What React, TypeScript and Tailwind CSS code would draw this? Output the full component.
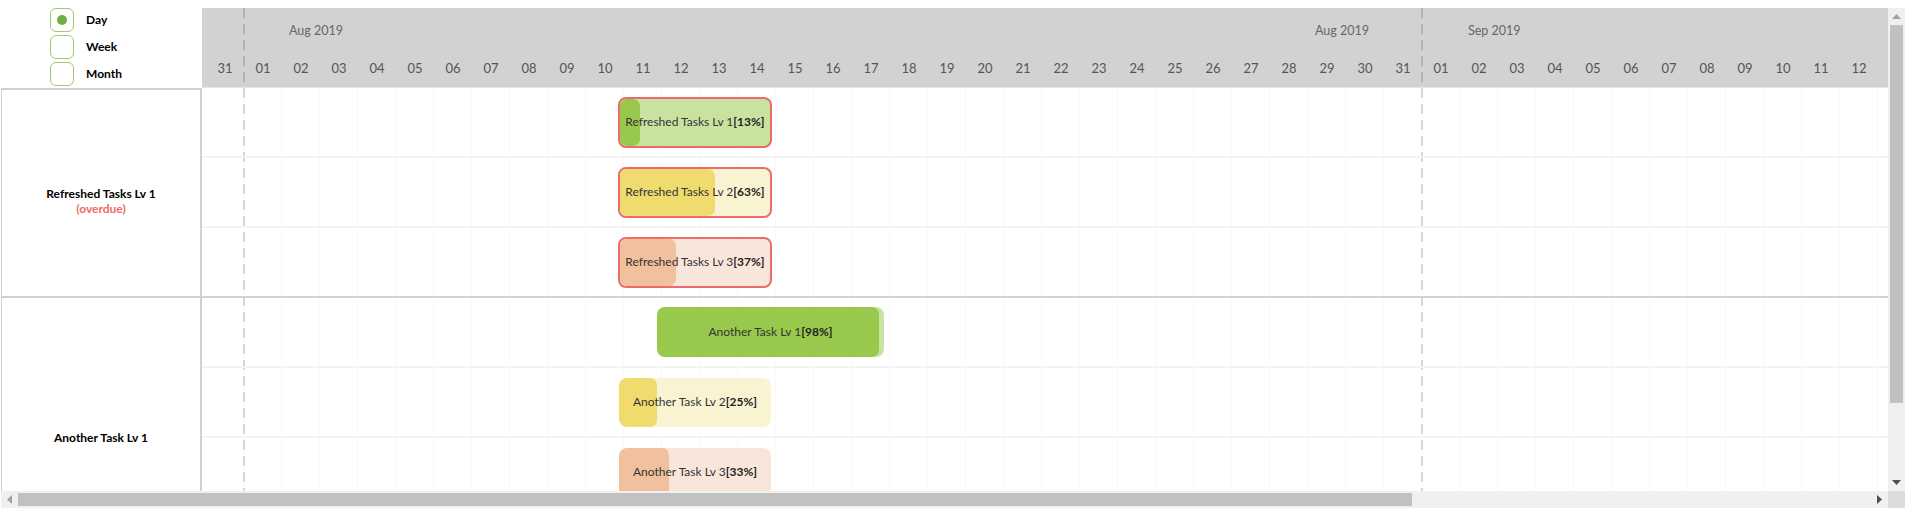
import React from "react";

const pad = (n: number) => String(n).padStart(2, "0");
const days = [
  "31",
  ...Array.from({ length: 31 }, (_, i) => pad(i + 1)),
  ...Array.from({ length: 12 }, (_, i) => pad(i + 1)),
];

type Task = {
  label: string;
  pct: number;
  left: number;
  width: number;
  height: number;
  fill: string;
  track: string;
  overdue?: boolean;
};

const groupOne: Task[] = [
  { label: "Refreshed Tasks Lv 1", pct: 13, left: 416, width: 154, height: 51, fill: "bg-[#98c94c]", track: "bg-[#c8e2a0]", overdue: true },
  { label: "Refreshed Tasks Lv 2", pct: 63, left: 416, width: 154, height: 51, fill: "bg-[#f0dc6e]", track: "bg-[#faf3d2]", overdue: true },
  { label: "Refreshed Tasks Lv 3", pct: 37, left: 416, width: 154, height: 51, fill: "bg-[#f0c19c]", track: "bg-[#f8e6da]", overdue: true },
];

const groupTwo: Task[] = [
  { label: "Another Task Lv 1", pct: 98, left: 455, width: 227, height: 50, fill: "bg-[#98c94c]", track: "bg-[#c8e2a0]" },
  { label: "Another Task Lv 2", pct: 25, left: 417, width: 152, height: 49, fill: "bg-[#f0dc6e]", track: "bg-[#faf3d2]" },
  { label: "Another Task Lv 3", pct: 33, left: 417, width: 152, height: 49, fill: "bg-[#f0c19c]", track: "bg-[#f8e6da]" },
];

function Bar({ task }: { task: Task }) {
  return (
    <div
      className={`relative shrink-0 overflow-hidden rounded-[8px] ${task.track} ${
        task.overdue ? "border-2 border-[#ee6b6b]" : ""
      }`}
      style={{ marginLeft: task.left, width: task.width, height: task.height }}
    >
      <div
        className={`absolute inset-y-0 left-0 rounded-[7px] ${task.fill}`}
        style={{ width: `${task.pct}%` }}
      />
      <div className="relative flex h-full items-center justify-center text-[12px] text-[#333]">
        {task.label}
        <span className="font-bold text-[#222]">[{task.pct}%]</span>
      </div>
    </div>
  );
}

function Row({ task, last }: { task: Task; last?: boolean }) {
  return (
    <div
      className={`flex h-[70px] shrink-0 items-center border-b-2 ${
        last ? "border-[#d2d2d2]" : "border-[#f3f3f3]"
      }`}
    >
      <Bar task={task} />
    </div>
  );
}

function Radio({ label, checked }: { label: string; checked?: boolean }) {
  return (
    <div className="flex items-center">
      <div className="ml-[49px] flex h-[24px] w-[24px] items-center justify-center rounded-[6px] border border-[#9ccc6a]">
        {checked && <div className="h-[10px] w-[10px] rounded-full bg-[#6fb043]" />}
      </div>
      <span className="ml-[12px] text-[12px] font-bold text-black">{label}</span>
    </div>
  );
}

const dashBody =
  "[background-image:linear-gradient(to_bottom,#d6d6d6_0,#d6d6d6_10px,transparent_10px,transparent_16px)] [background-size:2px_16px]";
const dashHead =
  "[background-image:linear-gradient(to_bottom,#b4b4b4_0,#b4b4b4_10px,transparent_10px,transparent_16px)] [background-size:2px_16px]";

export default function App() {
  return (
    <div className="h-[525px] w-[1913px] overflow-hidden bg-white pt-2 font-['Lato',sans-serif]">
      <div className="ml-[1px] w-[1904px]">
        <div className="flex h-[483px]">
          {/* left pane */}
          <div className="flex w-[201px] shrink-0 flex-col">
            <div className="flex h-[80px] flex-col gap-[3px]">
              <Radio label="Day" checked />
              <Radio label="Week" />
              <Radio label="Month" />
            </div>
            <div className="flex flex-1 flex-col border-l border-r-2 border-t-2 border-[#d0d0d0]">
              <div className="flex h-[208px] shrink-0 flex-col items-center border-b-2 border-[#d0d0d0] pt-[96px] text-[12px] leading-[15px]">
                <span className="font-bold text-black">Refreshed Tasks Lv 1</span>
                <span className="font-bold text-[#f06a6a]">(overdue)</span>
              </div>
              <div className="flex flex-1 flex-col items-center pt-[132px] text-[12px] leading-[15px]">
                <span className="font-bold text-black">Another Task Lv 1</span>
              </div>
            </div>
          </div>

          {/* timeline */}
          <div className="flex min-w-0 flex-1 flex-col overflow-hidden">
            <div className="relative h-[80px] shrink-0 border-b border-[#e6e6e6] bg-[#d2d2d2] text-[#555]">
              <div className={`absolute bottom-0 left-[41px] top-0 w-[2px] ${dashHead}`} />
              <div className={`absolute bottom-0 left-[1219px] top-0 w-[2px] ${dashHead}`} />
              <div className="flex h-[46px] items-center text-[12.5px] text-[#666]">
                <div className="w-[1113px] shrink-0 pl-[87px]">Aug 2019</div>
                <div className="w-[153px] shrink-0">Aug 2019</div>
                <div className="shrink-0">Sep 2019</div>
              </div>
              <div className="flex h-[30px] items-center pl-[4px] text-[13px]">
                {days.map((d, i) => (
                  <div key={i} className="w-[38px] shrink-0 text-center">
                    {d}
                  </div>
                ))}
              </div>
            </div>

            <div className="relative flex-1 overflow-hidden [background-image:repeating-linear-gradient(to_right,transparent_0,transparent_37px,#f9f9f9_37px,#f9f9f9_38px)] [background-position:4px_0]">
              <div className={`absolute bottom-0 left-[41px] top-0 w-[2px] ${dashBody}`} />
              <div className={`absolute bottom-0 left-[1219px] top-0 w-[2px] ${dashBody}`} />
              <div className="relative flex flex-col">
                {groupOne.map((t, i) => (
                  <Row key={t.label} task={t} last={i === groupOne.length - 1} />
                ))}
                {groupTwo.map((t) => (
                  <Row key={t.label} task={t} />
                ))}
              </div>
            </div>
          </div>

          {/* vertical scrollbar */}
          <div className="flex w-[17px] shrink-0 flex-col bg-[#f0f0f0]">
            <div className="flex h-[17px] items-center justify-center">
              <svg width="9" height="5" viewBox="0 0 9 5">
                <polygon points="4.5,0 9,5 0,5" fill="#a3a3a3" />
              </svg>
            </div>
            <div className="mx-[2px] h-[378px] bg-[#c1c1c1]" />
            <div className="flex-1" />
            <div className="flex h-[17px] items-center justify-center">
              <svg width="9" height="5" viewBox="0 0 9 5">
                <polygon points="0,0 9,0 4.5,5" fill="#505050" />
              </svg>
            </div>
          </div>
        </div>

        {/* horizontal scrollbar */}
        <div className="flex h-[17px]">
          <div className="flex flex-1 items-center bg-[#f0f0f0]">
            <div className="flex h-[17px] w-[17px] shrink-0 items-center justify-center">
              <svg width="5" height="9" viewBox="0 0 5 9">
                <polygon points="5,0 5,9 0,4.5" fill="#a3a3a3" />
              </svg>
            </div>
            <div className="h-[13px] w-[1394px] shrink-0 bg-[#c1c1c1]" />
            <div className="flex-1" />
            <div className="flex h-[17px] w-[17px] shrink-0 items-center justify-center">
              <svg width="5" height="9" viewBox="0 0 5 9">
                <polygon points="0,0 5,4.5 0,9" fill="#505050" />
              </svg>
            </div>
          </div>
          <div className="w-[17px] shrink-0 bg-[#dcdcdc]" />
        </div>
      </div>
    </div>
  );
}
